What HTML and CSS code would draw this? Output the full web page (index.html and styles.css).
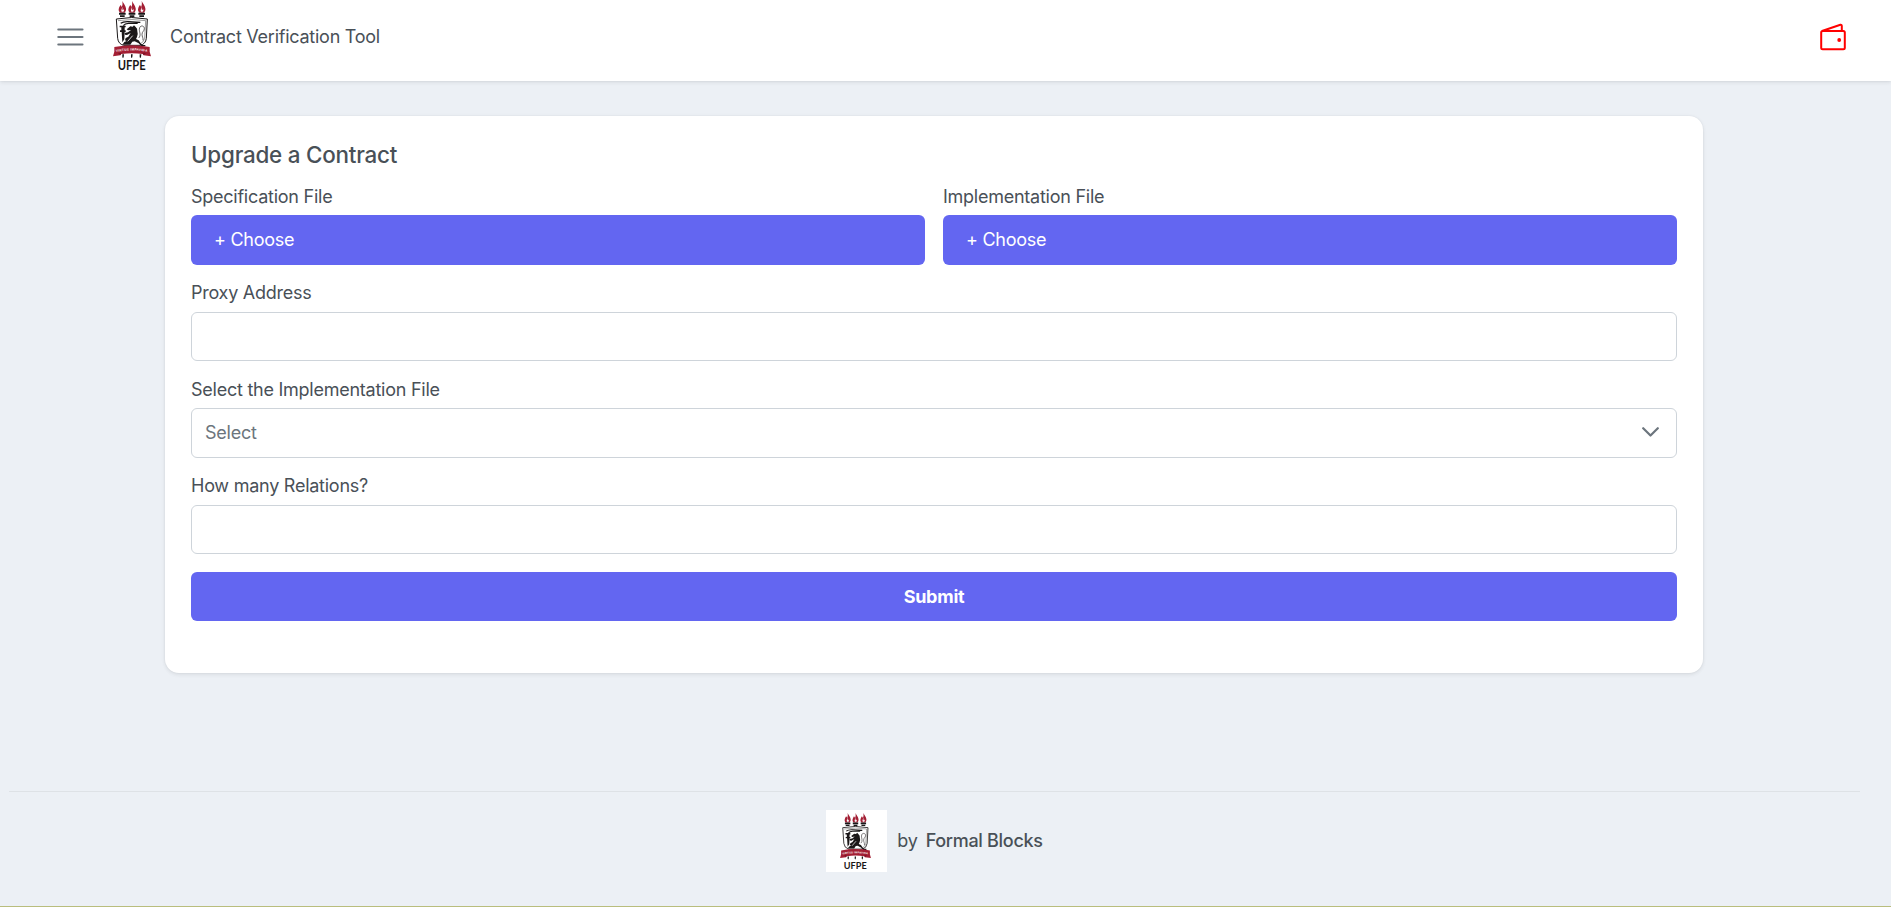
FILE: index.html
```html
<!DOCTYPE html>
<html lang="en">
<head>
<meta charset="utf-8">
<title>Contract Verification Tool</title>
<link rel="stylesheet" href="styles.css">
</head>
<body>
<header class="topbar">
  <button class="menu" aria-label="Menu">
    <svg class="bars" viewBox="0 0 27 18" stroke="#6c757d" stroke-width="2.1" stroke-linecap="round"><path d="M1.3 1.5h24.2M1.3 9h24.2M1.3 16.5h24.2"/></svg>
  </button>
  <svg class="logo" viewBox="0 0 114 210">
    <g id="crest">
      <g id="torch">
        <path fill="#a31f34" d="M28 0c2 6 10 13 11 22 1 6-1 10-4 13H21c-4-4-5-9-3-14 1-4 4-6 4-9 3 2 4 4 4 7 3-6 3-12 2-19z"/>
        <path fill="#fff" d="M28 17c1 5-1 8 2 11 1-2 2-3 2-5 2 5 1 8-2 9h-4c-3-5 1-8 2-15z"/>
        <path fill="#1a1718" d="M18 35h20v6H18zM21 43h14v5H21z"/>
      </g>
      <use href="#torch" x="29"/>
      <use href="#torch" x="58"/>
      <path fill="#fff" stroke="#1a1718" stroke-width="3" d="M10 54q46-9 93 0l-3 58q-2 17-18 21H32q-16-4-18-21z"/>
      <path fill="none" stroke="#1a1718" stroke-width="1.3" d="M15 59q42-7 83 0l-3 53q-2 11-14 17"/>
      <path fill="none" stroke="#1a1718" stroke-width="4" d="M23 67q8-6 24-5l35 2M31 74q5-7 15-7h28"/>
      <path fill="#1a1718" d="M20 74h18v5h-3v9h3v5h-3l-1 22-6 9-2-31h-5v-5h4v-9h-5z"/>
      <path fill="#1a1718" d="M45 82l7-6 7 1 4-4 5 5q6 4 5 13 3 8-1 17l-3 6 8 4 7 10 5 4h8v4H85l-8-9-12-6-7 1-6 9H28l6-8 7-3-5-2 2-7 8-4 7-11-11 6-6-1-1-5 10-2 9-7-9 1-4-3z"/>
      <path fill="none" stroke="#1a1718" stroke-width="2" d="M77 111c8-8 2-17 2-26 0-13 15-13 15-2 0 8-7 8-7 17 0 7 4 11 3 18"/>
      <path fill="none" stroke="#fff" stroke-width="2.5" d="M59 104l-15 17"/>
      <path fill="#a31f34" d="M4 138q54-10 106 0v14l4 14-22-3-3-4q-32-5-64 0l-3 4-22 3 4-14z"/>
      <path fill="#7c1426" d="M22 163l-7-7 10-1zM92 163l7-7-10-1z"/>
      <path fill="#1a1718" d="M28 160h5l-1 9-2 2-2-2zM54 160h5l-1 9-2 2-2-2zM80 160h5l-1 9-2 2-2-2z"/>
      <path id="arc" fill="none" d="M9 153q48-9 97 0"/>
    </g>
    <text class="motto"><textPath href="#arc" textLength="94">VIRTUS IMPAVIDA</textPath></text>
    <text class="ufpe" x="14" y="207" textLength="84" lengthAdjust="spacingAndGlyphs">UFPE</text>
  </svg>
  <span class="brand">Contract Verification Tool</span>
  <svg class="wallet" viewBox="0 0 27 28" fill="none" stroke="#f00" stroke-width="2" stroke-linejoin="round">
    <rect x="1.2" y="8" width="23.6" height="18.2" rx="1.5"/>
    <path d="M2 8L20.4 1.8Q21.8 1.5 21.8 3V8"/>
    <circle cx="19.2" cy="17" r="1.9" fill="#f00" stroke="none"/>
  </svg>
</header>

<main class="card">
  <h1 class="title">Upgrade a Contract</h1>
  <div class="files">
    <div class="field">
      <label class="label">Specification File</label>
      <button class="choose">+ Choose</button>
    </div>
    <div class="field">
      <label class="label">Implementation File</label>
      <button class="choose">+ Choose</button>
    </div>
  </div>
  <div class="field text">
    <label class="label">Proxy Address</label>
    <input class="input" type="text">
  </div>
  <div class="field">
    <label class="label">Select the Implementation File</label>
    <div class="select">
      <span>Select</span>
      <svg class="chevron" viewBox="0 0 17 10" fill="none" stroke="#6c757d" stroke-width="2.2" stroke-linecap="round" stroke-linejoin="round"><path d="M1.2 1.2l7.3 7.3 7.3-7.3"/></svg>
    </div>
  </div>
  <div class="field text">
    <label class="label">How many Relations?</label>
    <input class="input" type="text">
  </div>
  <button class="submit">Submit</button>
</main>

<footer class="footer">
  <span class="badge">
    <svg class="logo-small" viewBox="0 0 114 210">
      <use href="#crest"/>
      <text class="motto"><textPath href="#arc" textLength="94">VIRTUS IMPAVIDA</textPath></text>
      <text class="ufpe" x="14" y="207" textLength="84" lengthAdjust="spacingAndGlyphs">UFPE</text>
    </svg>
  </span>
  <span class="by">by</span>
  <span class="company">Formal Blocks</span>
</footer>
</body>
</html>
```
FILE: styles.css
```css
* { box-sizing: border-box; }
body {
  margin: 0;
  height: 907px;
  display: flex;
  flex-direction: column;
  overflow: hidden;
  background: #ecf0f5;
  border-bottom: 1px solid #b9bd7d;
  color: #495057;
  font: 400 18px/21px Inter, sans-serif;
  letter-spacing: -0.25px;
}
button, input { font: inherit; letter-spacing: inherit; margin: 0; }
.motto { font: 700 9.5px "Liberation Sans", sans-serif; letter-spacing: 0; fill: #fff; }
.ufpe { font: 700 37px Lato, sans-serif; letter-spacing: 0; fill: #1a1718; }

.topbar {
  flex: none;
  display: flex;
  align-items: center;
  height: 81px;
  padding: 0 44px 8px 57px;
  background: #fff;
  box-shadow: 0 3px 5px rgba(0,0,0,.02), 0 0 2px rgba(0,0,0,.05), 0 1px 4px rgba(0,0,0,.08);
}
.menu {
  display: flex;
  width: 27px;
  padding: 0;
  border: 0;
  background: none;
}
.bars { width: 27px; height: 18px; }
.logo { width: 38px; height: 70px; margin: 0 0 1px 29px; overflow: visible; }
.brand { margin-left: 19px; }
.wallet { width: 27px; height: 28px; margin-left: auto; }

.card {
  flex: none;
  display: flex;
  flex-direction: column;
  width: 1538px;
  height: 557px;
  margin: 35px 0 0 165px;
  padding: 25px 26px 26px;
  border-radius: 14px;
  background: #fff;
  box-shadow: 0 3px 5px rgba(0,0,0,.02), 0 0 2px rgba(0,0,0,.05), 0 1px 4px rgba(0,0,0,.08);
}
.title { margin: 0 0 18px; font-size: 22.4px; font-weight: 500; line-height: 27px; letter-spacing: -0.22px; }
.files { display: grid; grid-template-columns: 1fr 1fr; gap: 18px; }
.field { display: flex; flex-direction: column; margin-bottom: 18px; }
.label { height: 29px; line-height: 21px; }
.text .label { line-height: 19px; }
.choose {
  height: 50px;
  padding: 0 23px 2px;
  border: 0;
  border-radius: 6px;
  background: #6366f1;
  color: #fff;
  text-align: left;
}
.input { height: 49px; border: 1px solid #ced4da; border-radius: 6px; background: #fff; }
.select {
  display: flex;
  align-items: center;
  justify-content: space-between;
  height: 50px;
  padding: 0 17px 2px 13px;
  border: 1px solid #ced4da;
  border-radius: 6px;
  color: #6c757d;
}
.chevron { width: 17px; height: 10px; }
.submit {
  height: 49px;
  border: 0;
  border-radius: 6px;
  background: #6366f1;
  color: #fff;
  font-weight: 700;
}

.footer {
  flex: none;
  display: flex;
  align-items: center;
  justify-content: center;
  margin: 118px 31px 0 9px;
  padding-top: 18px;
  border-top: 1px solid #dee2e6;
}
.badge {
  display: flex;
  align-items: center;
  justify-content: center;
  width: 61px;
  height: 62px;
  padding-right: 2px;
  margin-right: 10px;
  background: #fff;
}
.logo-small { width: 31px; height: 57px; overflow: visible; }
.by, .company { padding-bottom: 2px; }
.by { margin-right: 8px; }
.company { font-weight: 500; letter-spacing: -0.3px; }
```
